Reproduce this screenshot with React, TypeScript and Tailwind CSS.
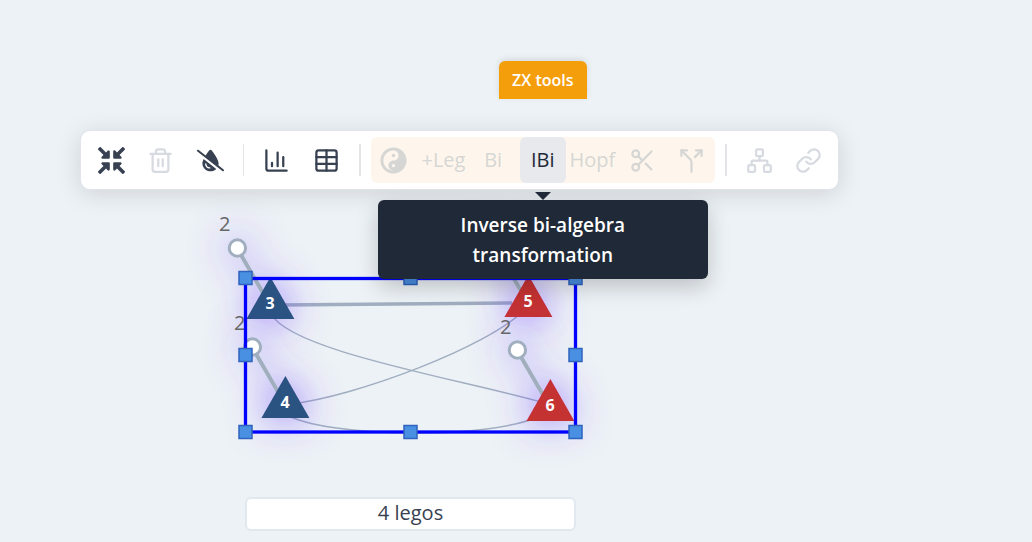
import React from "react";
import { ChartColumn, Link, Network, Scissors, Split, Table, Trash2 } from "lucide-react";
import { FaCompressArrowsAlt, FaYinYang } from "react-icons/fa";
import { FaDropletSlash } from "react-icons/fa6";

type Point = { x: number; y: number };

type Lego = Point & { id: number; color: string; leg: Point; legLabel?: Point };

const legos: Lego[] = [
  { id: 3, x: 270, y: 277, color: "#2c5282", leg: { x: 237, y: 248 }, legLabel: { x: 219, y: 231 } },
  { id: 4, x: 285, y: 376, color: "#2c5282", leg: { x: 252, y: 347 }, legLabel: { x: 234, y: 330 } },
  { id: 5, x: 528, y: 275, color: "#c53030", leg: { x: 495, y: 246 } },
  { id: 6, x: 550, y: 379, color: "#c53030", leg: { x: 517, y: 350 }, legLabel: { x: 500, y: 334 } },
];

const handles: Point[] = [
  { x: 245, y: 278 },
  { x: 410, y: 278 },
  { x: 575, y: 278 },
  { x: 245, y: 355 },
  { x: 575, y: 355 },
  { x: 245, y: 432 },
  { x: 410, y: 432 },
  { x: 575, y: 432 },
];

function LegoNode({ lego }: { lego: Lego }) {
  const { id, x, y, color, leg, legLabel } = lego;
  return (
    <g>
      <g filter="url(#glow)">
        <line x1={leg.x} y1={leg.y} x2={x} y2={y + 28} stroke="#a0aebd" strokeWidth="4" />
        <circle cx={leg.x + 0.4} cy={leg.y} r="8.2" fill="#fff" stroke="#a0aebf" strokeWidth="3" />
        <path d={`M${x + 0.4} ${y}l24 42h-48z`} fill={color} />
      </g>
      <text x={x} y={y + 32} textAnchor="middle" fill="#fff" className="text-[16px] font-bold">
        {id}
      </text>
      {legLabel && (
        <text x={legLabel.x} y={legLabel.y} fill="#666" className="text-[20px]">
          2
        </text>
      )}
    </g>
  );
}

function Canvas() {
  return (
    <svg className="absolute inset-0 h-full w-full" aria-label="Lego network">
      <defs>
        <filter id="glow" x="-100%" y="-100%" width="300%" height="300%">
          <feGaussianBlur in="SourceAlpha" stdDeviation="19" result="blur" />
          <feFlood floodColor="#6a3cff" floodOpacity="0.75" />
          <feComposite in2="blur" operator="in" result="halo" />
          <feMerge>
            <feMergeNode in="halo" />
            <feMergeNode in="SourceGraphic" />
          </feMerge>
        </filter>
      </defs>
      <g fill="none" stroke="#a0aec0">
        <path d="M280 305L512 303" strokeWidth="3.4" />
        <path d="M271 314C292 352 466 380 548 404" strokeWidth="1.5" />
        <path d="M524 310C490 346 355 397 290 404" strokeWidth="1.5" />
        <path d="M285 414C325 438 490 440 540 416" strokeWidth="1.5" />
      </g>
      {legos.map((lego) => (
        <LegoNode key={lego.id} lego={lego} />
      ))}
      <rect x="245.5" y="278.5" width="330" height="153.5" fill="none" stroke="#0000ff" strokeWidth="3.3" />
      {handles.map(({ x, y }) => (
        <rect
          key={`${x}-${y}`}
          x={x - 6}
          y={y - 6.5}
          width="13"
          height="13"
          fill="#4a90e2"
          stroke="#2f63bd"
          strokeWidth="1.5"
        />
      ))}
    </svg>
  );
}

type ToolProps = { label: string; disabled?: boolean; className?: string; children: React.ReactNode };

function Tool({ label, disabled, className = "text-[#374151]", children }: ToolProps) {
  return (
    <button
      type="button"
      aria-label={label}
      disabled={disabled}
      className={`flex h-[46px] w-[46px] items-center justify-center rounded-md text-xl ${className}`}
    >
      {children}
    </button>
  );
}

const faded = "text-[#d7dae0]";
const fadedZx = "text-[#d6d6d4]";

export default function App() {
  return (
    <main className="relative min-h-screen overflow-hidden bg-[#edf2f6] pt-[130px] pl-20 font-['Open_Sans','Noto_Sans',sans-serif]">
      <Canvas />

      <div
        role="toolbar"
        aria-label="Lego tools"
        className="relative flex w-[759px] items-center justify-between rounded-[10px] border border-[#e1e4e8] bg-white py-[6px] pr-[6px] pl-[7px] shadow-[0_4px_24px_rgba(0,0,0,0.13)]"
      >
        <Tool label="Collapse">
          <FaCompressArrowsAlt size={27} />
        </Tool>
        <Tool label="Remove" disabled className={faded}>
          <Trash2 size={27} />
        </Tool>
        <Tool label="Remove highlights">
          <FaDropletSlash size={27} />
        </Tool>
        <div className="mx-[6px] h-8 w-px bg-[#e2e4e7]" />
        <Tool label="Weight enumerator">
          <ChartColumn size={27} />
        </Tool>
        <Tool label="Parity check matrix">
          <Table size={27} />
        </Tool>
        <div className="mx-[6px] h-8 w-[2px] bg-[#e2e4e7]" />

        <div className="relative flex w-[344px] justify-between rounded-md bg-[#fef6ec]">
          <div className="absolute bottom-full left-1/2 mb-[38px] flex h-[38px] w-[88px] -translate-x-1/2 items-center justify-center rounded-t-md bg-[#f59e0b] text-base font-semibold whitespace-nowrap text-white shadow-[0_-2px_6px_rgba(0,0,0,0.1)]">
            ZX tools
          </div>
          <Tool label="Change color" disabled className={fadedZx}>
            <FaYinYang size={27} />
          </Tool>
          <Tool label="Pull out same color leg" disabled className={fadedZx}>
            +Leg
          </Tool>
          <Tool label="Bi-algebra" disabled className={fadedZx}>
            Bi
          </Tool>
          <div className="relative">
            <Tool label="Inverse bi-algebra" className="bg-[#e7e9ed] text-[#1f2937]">
              IBi
            </Tool>
            <div
              role="tooltip"
              className="absolute top-full left-1/2 mt-[17px] w-[330px] -translate-x-1/2 rounded-md bg-[#1f2937] px-16 pt-[10px] pb-[9px] text-center text-[19px] leading-[30px] font-semibold text-white shadow-[0_8px_22px_rgba(0,0,0,0.2)]"
            >
              <svg className="absolute bottom-full left-1/2 -translate-x-1/2" width="16" height="8" aria-hidden="true">
                <path d="M0 0h16l-8 8z" fill="#1f2937" />
              </svg>
              Inverse bi-algebra transformation
            </div>
          </div>
          <Tool label="Hopf rule" disabled className={fadedZx}>
            Hopf
          </Tool>
          <Tool label="Unfuse" disabled className={fadedZx}>
            <Scissors size={27} />
          </Tool>
          <Tool label="Unfuse into legs" disabled className={fadedZx}>
            <Split size={27} />
          </Tool>
        </div>

        <div className="mx-[6px] h-8 w-[2px] bg-[#e2e4e7]" />
        <Tool label="Complete graph" disabled className={faded}>
          <Network size={27} />
        </Tool>
        <Tool label="Connect via central lego" disabled className={faded}>
          <Link size={27} />
        </Tool>
      </div>

      <div className="absolute top-[497px] left-[245px] flex w-[331px] justify-center rounded-md border-2 border-[#e2e8f0] bg-white pb-[3px] text-[20px] leading-[27px] text-[#374151]">
        4 legos
      </div>
    </main>
  );
}
